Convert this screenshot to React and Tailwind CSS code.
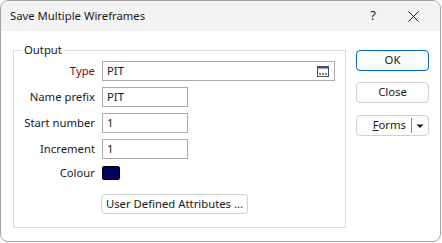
import React from "react";

const Field = ({ label, value, width = "w-[86px]", labelClass = "text-[#1a1a1a]", children }) => (
  <div className="flex items-center h-[20px]">
    <label className={`w-[82px] pr-[1px] text-right whitespace-nowrap ${labelClass}`}>{label}</label>
    <div
      className={`ml-[6px] ${width} h-[20px] border border-[#acacac] bg-white flex items-center pl-[4px] pr-[5px]`}
    >
      <span className="flex-1">{value}</span>
      {children}
    </div>
  </div>
);

// small "browse" icon shown in the Type field
const BrowseIcon = () => (
  <svg width="12" height="11" viewBox="0 0 12 11">
    <rect x="0.5" y="0.5" width="11" height="10" fill="white" stroke="#3b5470" />
    <rect x="0.5" y="0.5" width="11" height="2" fill="#3b5470" />
    <rect x="2" y="7" width="2" height="2" fill="#9a7a3a" />
    <rect x="5" y="7" width="2" height="2" fill="#9a7a3a" />
    <rect x="8" y="7" width="2" height="2" fill="#9a7a3a" />
  </svg>
);

const Button = ({ children, primary }) => (
  <button
    className={`w-[73px] h-[21px] rounded-[4px] bg-[#fdfdfd] text-center ${
      primary ? "border border-[#0067c0]" : "border border-[#d0d0d0]"
    }`}
  >
    {children}
  </button>
);

export default function App() {
  return (
    <div
      className="w-[442px] h-[243px] bg-white text-[11.3px] text-[#1a1a1a]"
      style={{ fontFamily: '"Segoe UI", "Noto Sans", sans-serif' }}
    >
      <div className="w-[441px] h-[242px] border border-[#a3a3a3] rounded-[8px] overflow-hidden flex flex-col">
        {/* Title bar */}
        <div className="h-[30px] bg-[#f3f3f3] flex items-center pl-[9px]">
          <span className="flex-1">Save Multiple Wireframes</span>
          <span className="w-[20px] text-center mr-[25px] text-[13px]">?</span>
          <svg width="11" height="11" viewBox="0 0 11 11" className="mr-[21px]">
            <path d="M0.5 0.5 L10.5 10.5 M10.5 0.5 L0.5 10.5" stroke="#1a1a1a" strokeWidth="1" />
          </svg>
        </div>

        {/* Body */}
        <div className="flex-1 flex pl-[12px] pt-[19px]">
          {/* Output group */}
          <div className="relative w-[333px] h-[178px] border border-[#dcdcdc]">
            <span className="absolute -top-[9px] left-[8px] px-[2px] bg-white leading-[16px]">
              Output
            </span>
            <div className="flex flex-col gap-[6px] pt-[10px]">
              <Field label="Type" value="PIT" width="w-[233px]" labelClass="text-[#8b0a14]">
                <BrowseIcon />
              </Field>
              <Field label="Name prefix" value="PIT" />
              <Field label="Start number" value="1" />
              <Field label="Increment" value="1" />
              <div className="flex items-center h-[14px] mt-[1px]">
                <label className="w-[82px] pr-[1px] text-right">Colour</label>
                <div className="ml-[6px] w-[18px] h-[14px] rounded-[2px] border border-black bg-[#000066]" />
              </div>
              <div className="pl-[87px] mt-[8px]">
                <button className="w-[147px] h-[20px] rounded-[4px] border border-[#d0d0d0] bg-[#fdfdfd] whitespace-nowrap">
                  User Defined Attributes ...
                </button>
              </div>
            </div>
          </div>

          {/* Right buttons */}
          <div className="ml-[10px] flex flex-col">
            <Button primary>OK</Button>
            <div className="mt-[11px]">
              <Button>Close</Button>
            </div>
            <div className="mt-[12px] w-[73px] h-[21px] rounded-[4px] border border-[#d0d0d0] bg-[#fdfdfd] flex items-center">
              <span className="flex-1 text-right pr-[5px]">
                <span className="underline">F</span>orms
              </span>
              <div className="w-px h-[15px] bg-[#8a8a8a]" />
              <svg width="16" height="6" viewBox="0 0 16 6">
                <path d="M4.5 1.5 L11.5 1.5 L8 5 Z" fill="#1a1a1a" />
              </svg>
            </div>
          </div>
        </div>
      </div>
    </div>
  );
}
